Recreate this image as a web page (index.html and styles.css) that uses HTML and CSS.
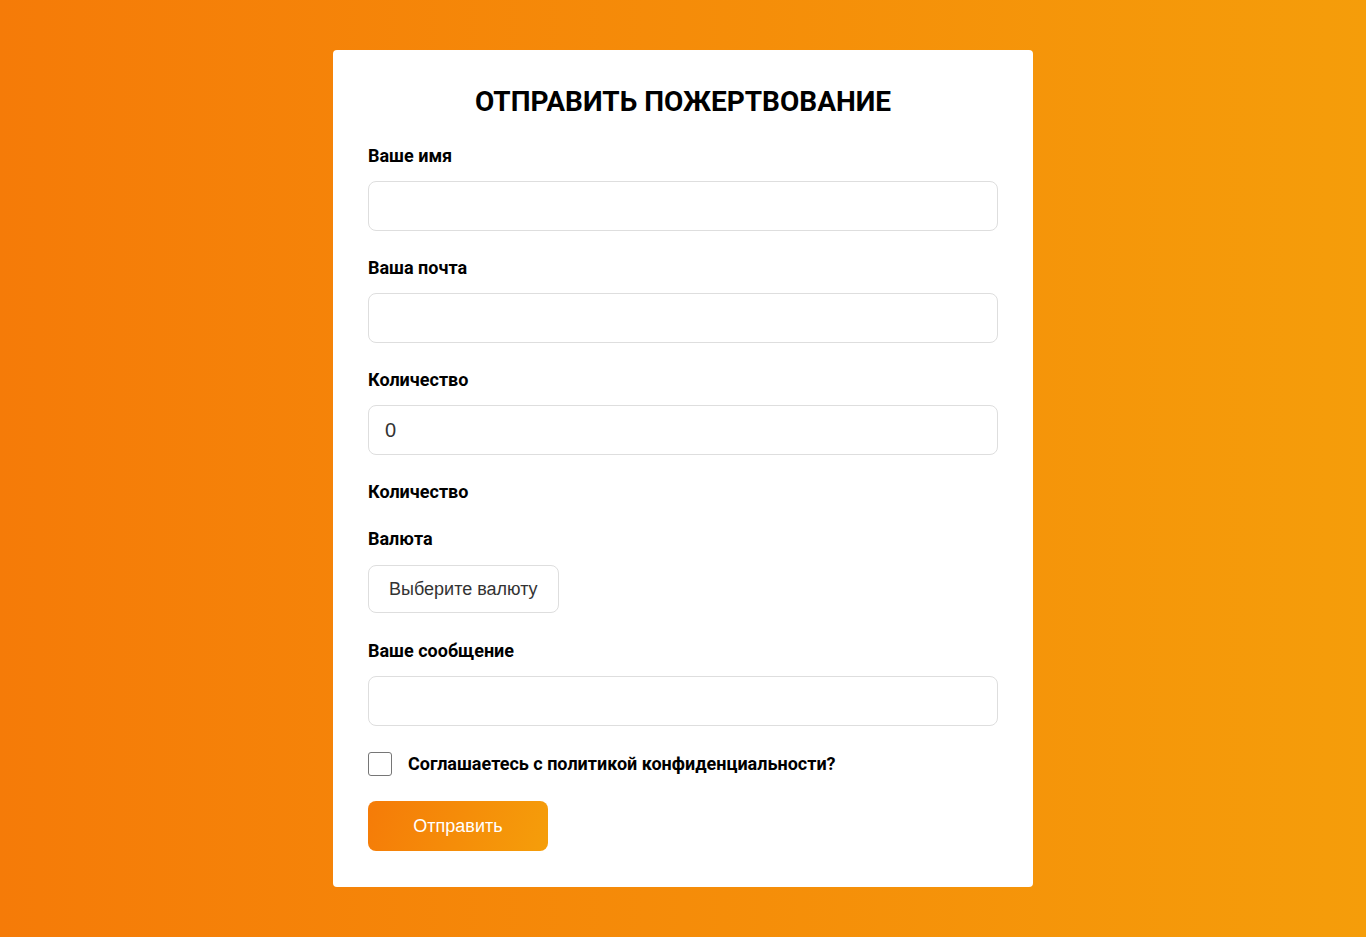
FILE: index.html
```html
<!DOCTYPE html>
<html lang="ru">
<head>
<meta charset="utf-8">
<title>Отправить пожертвование</title>
<link rel="stylesheet" href="styles.css">
</head>
<body>
<main class="card">
  <h1 class="title">ОТПРАВИТЬ ПОЖЕРТВОВАНИЕ</h1>
  <form class="form">
    <div class="field">
      <label class="label" for="name">Ваше имя</label>
      <input class="input" id="name" type="text">
    </div>
    <div class="field">
      <label class="label" for="email">Ваша почта</label>
      <input class="input" id="email" type="email">
    </div>
    <div class="field">
      <label class="label" for="amount">Количество</label>
      <input class="input" id="amount" type="text" value="0">
    </div>
    <div class="field field-empty">
      <span class="label">Количество</span>
    </div>
    <div class="field field-currency">
      <span class="label">Валюта</span>
      <button type="button" class="select-btn">Выберите валюту</button>
    </div>
    <div class="field">
      <label class="label" for="msg">Ваше сообщение</label>
      <input class="input" id="msg" type="text">
    </div>
    <label class="check-row">
      <span class="checkbox"></span>
      <span class="check-text">Соглашаетесь с политикой конфиденциальности?</span>
    </label>
    <button type="button" class="submit">Отправить</button>
  </form>
</main>
</body>
</html>
```

FILE: styles.css
```css
* { box-sizing: border-box; }
html, body { margin: 0; }
body {
  min-height: 937px;
  padding: 50px 0;
  background: linear-gradient(to right, #f57b08, #f59d0a);
  font-family: Roboto, "Liberation Sans", sans-serif;
  color: #000;
}
.card {
  width: 700px;
  margin: 0 auto;
  background: #fff;
  border-radius: 4px;
  padding: 35px 35px 36px;
}
.title {
  margin: 0 0 27px;
  font-family: Roboto, sans-serif;
  font-size: 28px;
  line-height: 33px;
  font-weight: 700;
  text-align: center;
}
.form { display: flex; flex-direction: column; }
.field { display: flex; flex-direction: column; align-items: flex-start; margin-bottom: 26px; }
.field-empty { margin-bottom: 11px; }
.field-currency { margin-bottom: 27px; }
.label {
  display: block;
  font-size: 18px;
  line-height: 21px;
  font-weight: 700;
  margin-bottom: 15px;
}
.input {
  width: 100%;
  height: 50px;
  border: 1px solid #dedede;
  border-radius: 8px;
  padding: 0 16px;
  font-family: "Liberation Sans", Arial, sans-serif;
  font-size: 20px;
  color: #333;
  background: #fff;
  outline: none;
}
.select-btn {
  height: 48px;
  margin-top: 1px;
  padding: 0 20px;
  border: 1px solid #dedede;
  border-radius: 8px;
  background: #fff;
  font-family: "Liberation Sans", Arial, sans-serif;
  font-size: 18px;
  color: #333;
}
.check-row {
  display: flex;
  align-items: center;
  gap: 16px;
  margin-bottom: 25px;
}
.checkbox {
  width: 24px;
  height: 24px;
  border: 1px solid #767676;
  border-radius: 3px;
  background: #fff;
}
.check-text { font-size: 18px; font-weight: 700; line-height: 24px; }
.submit {
  width: 180px;
  height: 50px;
  border: 0;
  border-radius: 8px;
  background: linear-gradient(110deg, #f57b08, #f59e0a);
  color: #fff;
  font-family: "Liberation Sans", Arial, sans-serif;
  font-size: 18px;
}
```
